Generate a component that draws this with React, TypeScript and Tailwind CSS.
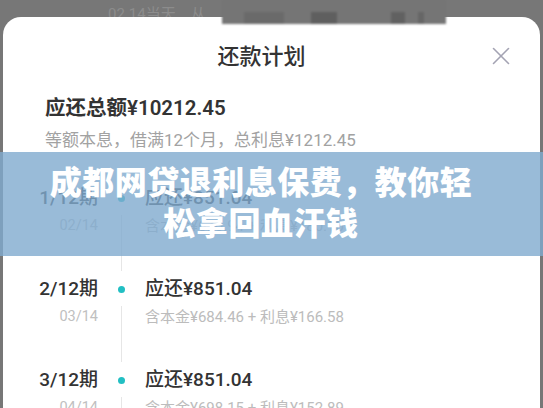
import { X } from 'lucide-react';

const font = { fontFamily: "Roboto, 'Noto Sans CJK SC', sans-serif" };

const periods = [
  { no: '1/12期', date: '02/14', amount: '应还¥851.04', detail: '含本金¥670.94 + 利息¥180.10' },
  { no: '2/12期', date: '03/14', amount: '应还¥851.04', detail: '含本金¥684.46 + 利息¥166.58' },
  { no: '3/12期', date: '04/14', amount: '应还¥851.04', detail: '含本金¥698.15 + 利息¥152.89' },
];

export default function App() {
  return (
    <div
      className="relative w-[543px] h-[408px] overflow-hidden bg-[#777777] flex flex-col"
      style={font}
    >
      {/* page behind the sheet, mostly hidden */}
      <div className="h-[17px] shrink-0 flex items-end pl-[108px] overflow-hidden">
        <span className="text-[15px] leading-[18px] translate-y-[6px] text-[#8c8c8c]">02.14当天　从</span>
      </div>
      <div className="absolute left-[222px] top-0 w-[224px] h-[24px] bg-[#757575] blur-[1px] flex items-end gap-[27px] pl-[22px]">
        <div className="w-[40px] h-[12px] bg-[#6a6a6a]" />
        <div className="w-[26px] h-[12px] bg-[#5f5f5f]" />
        <div className="ml-[27px] w-[14px] h-[12px] bg-[#616161]" />
        <div className="-ml-[14px] w-[6px] h-[12px] bg-[#666666]" />
      </div>

      {/* bottom sheet */}
      <div className="flex-1 mx-[3px] bg-white rounded-t-[18px] flex flex-col">
        <div className="relative h-[78px] shrink-0 flex items-center justify-center">
          <span className="text-[22px] font-medium text-[#333333] mr-[20px]">还款计划</span>
          <X
            className="absolute right-[24px] top-[24px] text-[#a4a3b3]"
            size={30}
            strokeWidth={1.3}
          />
        </div>

        <div className="pl-[42px]">
          <div className="text-[20.5px] leading-[26px] font-semibold text-[#333333]">应还总额¥10212.45</div>
          <div className="mt-[7px] text-[17px] leading-[24px] text-[#a2a2a2]">
            等额本息，借满12个月，总利息¥1212.45
          </div>
        </div>

        <div className="mt-[33px] flex flex-col">
          {periods.map((p) => (
            <div key={p.no} className="flex h-[91px] shrink-0">
              <div className="w-[95px] flex flex-col items-end">
                <span className="text-[19px] leading-[26px] font-medium text-[#333333]">{p.no}</span>
                <span className="mt-[5px] text-[14.5px] leading-[20px] text-[#c0c0c0]">{p.date}</span>
              </div>
              <div className="w-[47px] flex flex-col items-center">
                <div className="mt-[10px] w-[7px] h-[7px] rounded-full bg-[#22bfc3]" />
                <div className="mt-[13px] mb-[5px] w-px flex-1 bg-[#e6e6e6]" />
              </div>
              <div className="flex flex-col">
                <span className="text-[19px] leading-[26px] font-medium text-[#333333]">{p.amount}</span>
                <span className="mt-[5px] text-[15px] leading-[20px] text-[#bcbcbc]">{p.detail}</span>
              </div>
            </div>
          ))}
        </div>
      </div>

      {/* headline banner laid over the screenshot */}
      <div className="absolute left-0 right-0 top-[152px] h-[104px] bg-[rgba(128,170,206,0.8)] flex flex-col items-center justify-center pr-[21px]">
        <p className="text-[32px] leading-[41px] font-black text-white tracking-[0.5px]">成都网贷退利息保费，教你轻</p>
        <p className="text-[32px] leading-[41px] font-black text-white tracking-[0.5px]">松拿回血汗钱</p>
      </div>
    </div>
  );
}
